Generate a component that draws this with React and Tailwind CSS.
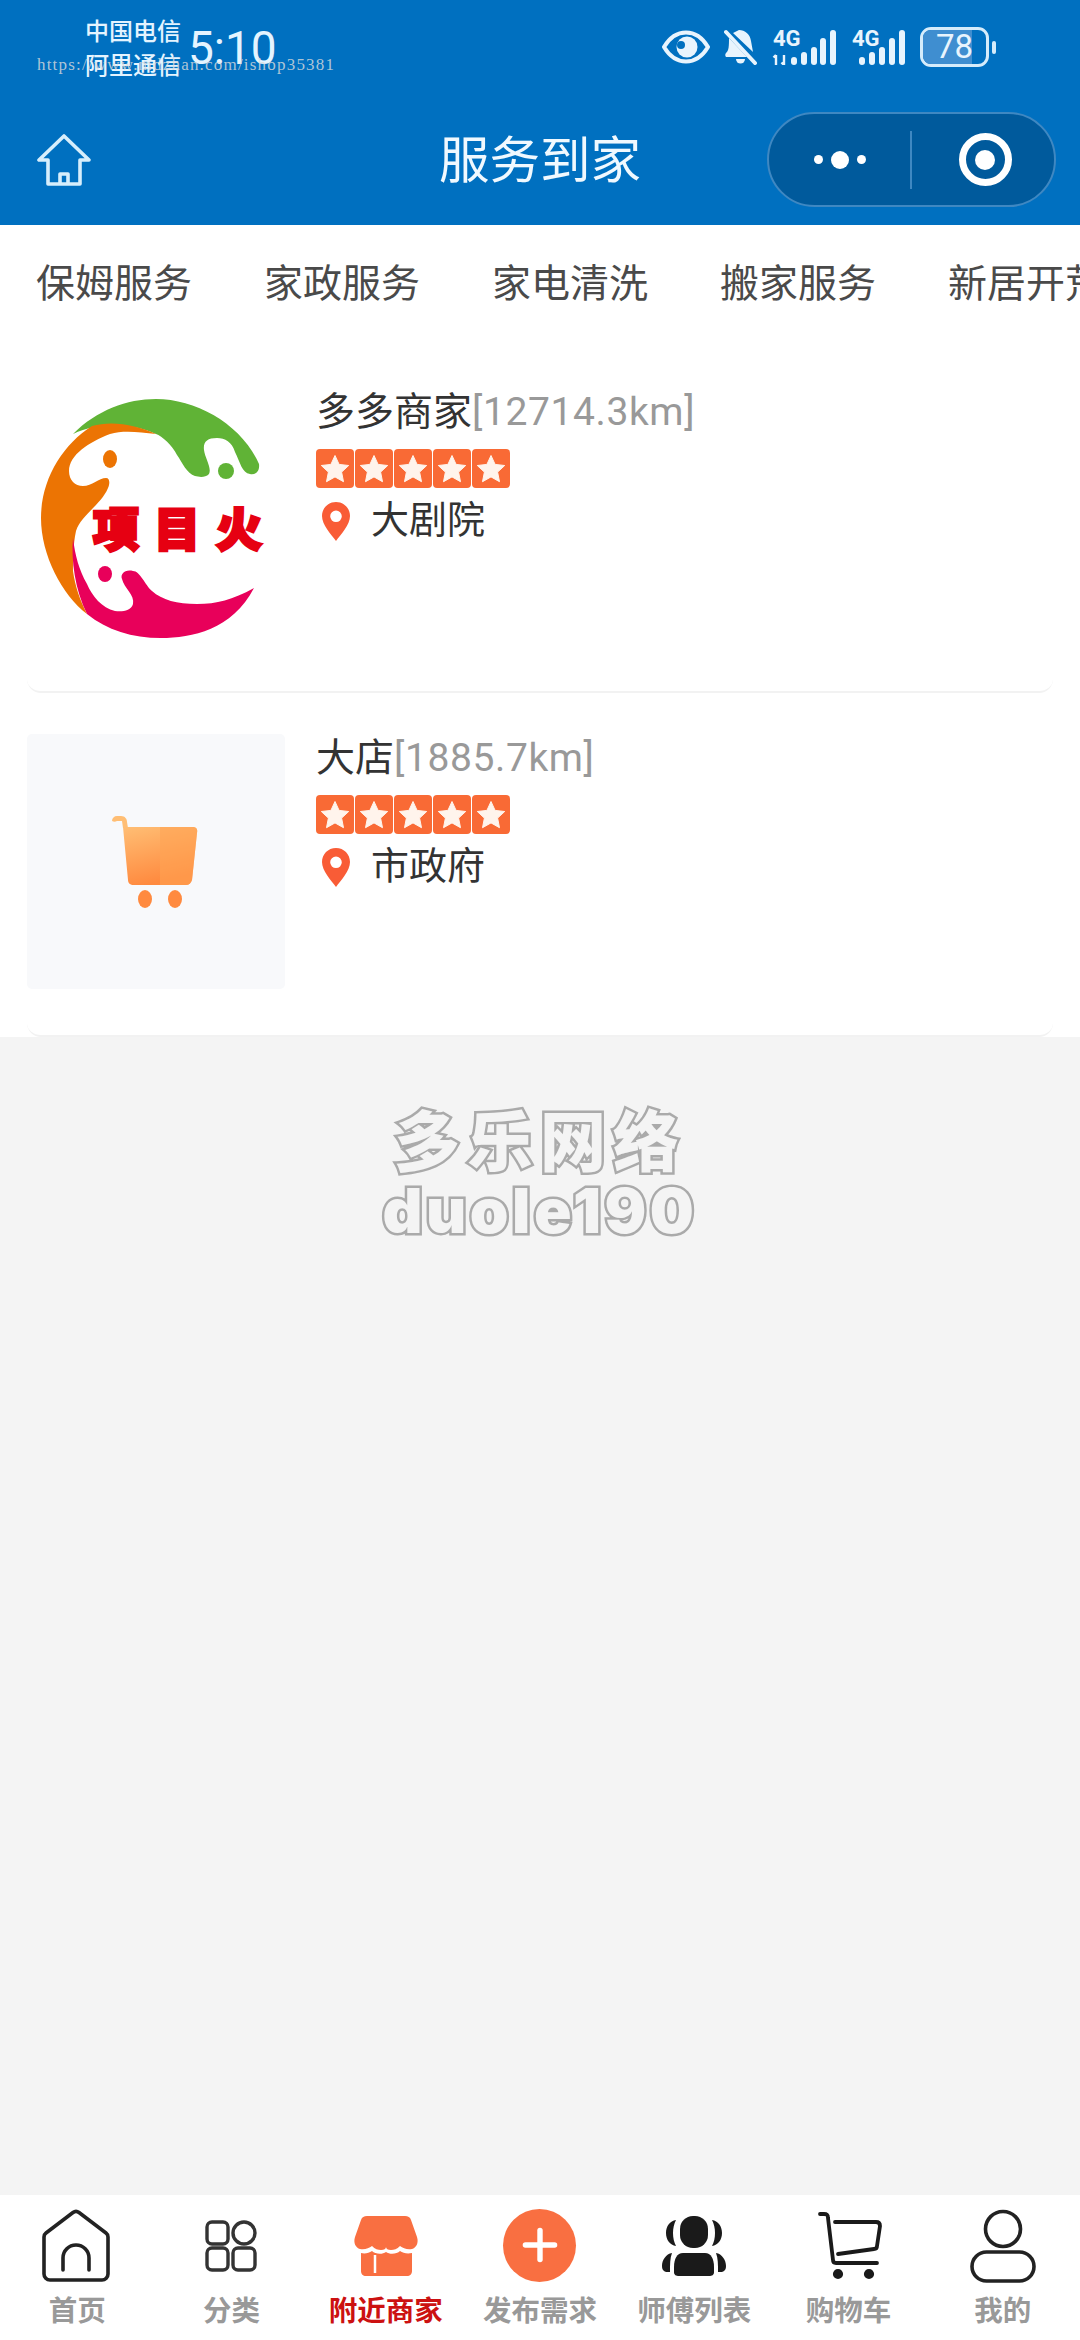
import { Plus } from 'lucide-react';

const tabs = ['保姆服务', '家政服务', '家电清洗', '搬家服务', '新居开荒'];

const Stars = () => (
  <div className="flex gap-[1.600px] h-[39px]">
    {[0, 1, 2, 3, 4].map((i) => (
      <div key={i} className="w-[37.500px] h-[39px] rounded-[4px] bg-[#f96a35] flex items-center justify-center">
        <svg width="32" height="32" viewBox="0 0 32 32">
          <path d="M16 2.500l4.100 8.900 9.600 1.100-7.100 6.600 1.900 9.600-8.500-4.800-8.500 4.800 1.900-9.600-7.100-6.600 9.600-1.100z" fill="#fff4ec" stroke="#fff4ec" strokeLinejoin="round" />
        </svg>
      </div>
    ))}
  </div>
);

const Pin = () => (
  <svg width="28" height="39" viewBox="0 0 28 39">
    <path fillRule="evenodd" d="M14 0C6 0 0 6.300 0 14c0 9 9 18 14 25 5-7 14-16 14-25C28 6.300 22 0 14 0zm0 8.500a5.800 5.800 0 1 1 0 11.600 5.800 5.800 0 0 1 0-11.600z" fill="#f95c36" />
  </svg>
);

const LogoImage = () => (
  <svg width="258" height="255" viewBox="0 0 258 255" className="shrink-0">
    <path d="M46 44C70 20 100 9 129 9C170 9 215 35 232 74C233 82 228 85 223 84C215 83 213 72 208 62C205 52 198 48 190 48C180 48 176 52 177 60C178 68 185 78 182 84C178 88 172 87 168 86C160 84 155 72 150 65C145 55 135 46 129 44C110 35 75 30 46 44Z" fill="#60b336" />
    <circle cx="199" cy="81" r="8" fill="#60b336" />
    <path d="M60 224C35 205 14 165 14 128C14 90 35 55 65 36C85 30 110 35 129 44C112 42 96 40 83 44C62 52 42 65 42 81C42 90 48 96 56 96C65 96 72 88 79 88C83 88 83 94 81 98C74 115 54 125 49 141C46 155 46 170 46 181C48 196 53 210 60 224Z" fill="#ec7403" />
    <ellipse cx="83" cy="69" rx="7" ry="9" fill="#ec7403" />
    <path d="M46 148C44 170 48 200 60 224C80 240 105 248 134 248C165 248 205 240 227 198C205 210 190 214 170 214C150 214 135 210 125 201C118 195 113 181 106 181C98 179 93 184 95 189C97 198 108 205 106 214C104 221 95 222 88 221C75 218 65 206 60 194C52 180 48 165 46 148Z" fill="#e8005a" />
    <ellipse cx="78" cy="184" rx="7" ry="8" fill="#e8005a" />
    <g className="font-['Noto_Sans_CJK_SC',sans-serif] font-black" fill="#e60012" stroke="#e60012" strokeWidth="3" fontSize="46">
      <text x="66" y="156">项</text>
      <text x="127" y="156">目</text>
      <text x="189" y="156">火</text>
    </g>
  </svg>
);

const CartImage = () => (
  <div className="w-[258px] h-[255px] shrink-0 rounded-[5px] bg-[#f8f9fb]">
    <svg width="258" height="255" viewBox="0 0 258 255">
      <defs>
        <linearGradient id="cartBody" x1="0" y1="0" x2="0.3" y2="1">
          <stop offset="0" stopColor="#ffbe74" />
          <stop offset="1" stopColor="#ff8a3f" />
        </linearGradient>
      </defs>
      <path d="M85 87a5 5 0 0 1 5-5h4c4 0 6 3 6 6l1 6h-5l-1-7h-5a5 5 0 0 1-5 0z" fill="#ffbe74" />
      <path d="M96 93h70c3 0 5 2 4 6l-5 47c-1 3-3 5-6 5h-52c-4 0-6-2-6-5l-5-53z" fill="url(#cartBody)" />
      <path d="M133 93h33c3 0 5 2 4 6l-5 47c-1 3-3 5-6 5h-26z" fill="#ffa454" opacity=".55" />
      <ellipse cx="118" cy="165" rx="7" ry="9" fill="#ff8a3f" />
      <ellipse cx="148" cy="165" rx="7" ry="9" fill="#ff8a3f" />
    </svg>
  </div>
);

const Bars = ({ xs }) => {
  const heights = [8, 13, 18, 27, 35];
  return xs.map((x, i) => (
    <rect key={x} x={x} y={36 - heights[i]} width="6" height={heights[i]} rx="3" fill="#e8f4fd" />
  ));
};

const StatusIcons = () => (
  <div className="ml-auto flex items-center">
    {/* eye */}
    <svg width="48" height="34" viewBox="0 0 48 34">
      <path d="M2 17C8 7 15 2.500 24 2.500S40 7 46 17c-6 10-13 14.500-22 14.500S8 27 2 17z" fill="none" stroke="#e8f4fd" strokeWidth="4" strokeLinejoin="round" />
      <circle cx="25" cy="17" r="10.500" fill="#e8f4fd" />
      <circle cx="19" cy="15" r="4" fill="#0070c0" />
    </svg>
    {/* muted bell */}
    <svg width="34" height="36" viewBox="0 0 34 36" className="ml-[14px]">
      <path d="M15 1c6 0 11 4 12 11l2 11-20-19zM5 9l18 19H2c-1-1-1-3 0-4 3-2 3-8 3-15z" fill="#e8f4fd" />
      <path d="M12 30h9a4.500 4.500 0 0 1-9 0z" fill="#e8f4fd" />
      <path d="M2 3l29 31" stroke="#e8f4fd" strokeWidth="4" strokeLinecap="round" />
    </svg>
    {/* first sim */}
    <svg width="66" height="44" viewBox="0 -8 66 44" className="ml-[13px] -mt-[8px]">
      <text x="2" y="17" fontSize="22" fontWeight="700" fill="#e8f4fd" className="font-['Roboto',sans-serif]">4G</text>
      <path d="M5 36V26M2.500 28.500L5 26M13 26v10M10.500 33.500L13 36" stroke="#e8f4fd" strokeWidth="2.400" fill="none" />
      <Bars xs={[20, 30, 40, 49, 59]} />
    </svg>
    {/* second sim */}
    <svg width="53" height="44" viewBox="0 -8 53 44" className="ml-[15px] -mt-[8px]">
      <text x="0" y="17" fontSize="22" fontWeight="700" fill="#e8f4fd" className="font-['Roboto',sans-serif]">4G</text>
      <Bars xs={[7, 17, 27, 37, 47]} />
    </svg>
    {/* battery */}
    <div className="ml-[15px] flex items-center gap-[3px]">
      <div className="relative w-[69px] h-[40px] rounded-[11px] border-[3px] border-[#d5ecfb] overflow-hidden">
        <div className="absolute left-0 top-0 bottom-0 w-[78%] bg-[#3f8ed0]" />
        <div className="relative text-center text-[33px] leading-[34px] text-[#e8f4fd] font-['Roboto',sans-serif]">78</div>
      </div>
      <div className="w-[4px] h-[13px] rounded-full bg-[#d5ecfb]" />
    </div>
  </div>
);

const ShopRow = ({ image, name, dist, place, top, infoTop }) => (
  <div className={`mx-[27px] flex gap-[31px] pb-[46px] border-b-2 border-[#f2f2f2] rounded-b-[14px] ${top}`}>
    {image}
    <div className={`flex flex-col items-start ${infoTop}`}>
      <div className="h-[44px] leading-[44px] text-[39px] whitespace-nowrap">
        <span className="text-[#333333]">{name}</span>
        <span className="text-[#999999] tracking-[0.600px]">[{dist}km]</span>
      </div>
      <div className="mt-[15px]"><Stars /></div>
      <div className="mt-[11px] flex items-center h-[42px]">
        <div className="ml-[6px] mt-[3px]"><Pin /></div>
        <span className="ml-[21px] text-[38px] leading-[42px] text-[#333333]">{place}</span>
      </div>
    </div>
  </div>
);

const navIcons = {
  home: (
    <svg width="76" height="76" viewBox="0 0 76 76" fill="none" stroke="#222222" strokeWidth="3.600" strokeLinecap="round" strokeLinejoin="round">
      <path d="M34 4.500a5 5 0 0 1 6 0l27 20.500a5 5 0 0 1 2 4V66a6 6 0 0 1-6 6H11a6 6 0 0 1-6-6V29a5 5 0 0 1 2-4z" />
      <path d="M24 62V50a13 13 0 0 1 26 0v12" />
    </svg>
  ),
  cate: (
    <svg width="76" height="76" viewBox="0 0 76 76" fill="none" stroke="#333333" strokeWidth="3.400">
      <rect x="14" y="14" width="21" height="22" rx="5" />
      <circle cx="51" cy="25" r="11" />
      <rect x="14" y="40" width="21" height="22" rx="5" />
      <rect x="40" y="40" width="22" height="22" rx="5" />
    </svg>
  ),
  shop: (
    <svg width="76" height="76" viewBox="0 0 76 76">
      <path d="M19 8h38c3 0 5 1 6 4l6 17c2 6-1 11-5 12-5 1-9-1-12-3-3 3-6 4-9 4-3 0-5-1-5-3 0 2-2 3-5 3-3 0-6-1-9-4-3 2-7 4-12 3-4-1-7-6-5-12l6-17c1-3 3-4 6-4z" fill="#f96f41" />
      <path d="M13 45c4 1 8 0 11-2 3 3 10 4 14 1 4 3 11 2 14-1 3 2 7 3 12 2v18c0 3-2 5-5 5H18c-3 0-5-2-5-5z" fill="#f96f41" />
      <path d="M27 47v18" stroke="#fff" strokeWidth="2.500" />
    </svg>
  ),
  publish: (
    <div className="w-[73px] h-[73px] -mt-[2px] rounded-full bg-[#f96f41] flex items-center justify-center">
      <Plus size={50} color="#ffffff" strokeWidth={2.600} />
    </div>
  ),
  master: (
    <svg width="76" height="76" viewBox="0 0 76 76" fill="#1a1a1a">
      <rect x="24" y="8" width="28" height="32" rx="13" />
      <path d="M20 12c-6 1-10 6-10 13s4 12 10 13c-2-4-3-8-3-13s1-9 3-13zM56 12c6 1 10 6 10 13s-4 12-10 13c2-4 3-8 3-13s-1-9-3-13z" />
      <path d="M27 45h22c6 0 9 6 9 14v5c0 3-2 4-5 4H23c-3 0-5-1-5-4v-5c0-8 3-14 9-14z" />
      <path d="M16 45c-6 1-10 7-10 13 0 4 2 6 6 6h2c0-8 0-14 2-19zM60 45c6 1 10 7 10 13 0 4-2 6-6 6h-2c0-8 0-14-2-19z" />
    </svg>
  ),
  cart: (
    <svg width="76" height="76" viewBox="0 0 76 76" fill="none" stroke="#1a1a1a" strokeWidth="3.800" strokeLinecap="round" strokeLinejoin="round">
      <path d="M9 6h4c3 0 4 1 4 4l5 42c0 2 1 3 3 3h41" />
      <path d="M24 14h41c3 0 4 2 4 4l-3 20c0 2-1 3-3 3l-36 5" />
      <circle cx="27" cy="66" r="3.200" fill="#1a1a1a" />
      <circle cx="58" cy="66" r="3.200" fill="#1a1a1a" />
    </svg>
  ),
  me: (
    <svg width="76" height="76" viewBox="0 0 76 76" fill="none" stroke="#222222" strokeWidth="3.600">
      <circle cx="38" cy="21" r="17.500" />
      <rect x="7" y="44" width="62" height="29" rx="14.500" />
    </svg>
  ),
};

const navItems = [
  { key: 'home', label: '首页' },
  { key: 'cate', label: '分类' },
  { key: 'shop', label: '附近商家', active: true },
  { key: 'publish', label: '发布需求' },
  { key: 'master', label: '师傅列表' },
  { key: 'cart', label: '购物车' },
  { key: 'me', label: '我的' },
];

export default function App() {
  return (
    <div className="relative flex flex-col w-[1080px] h-[2340px] overflow-hidden bg-[#f4f4f4] font-['Roboto','Noto_Sans_CJK_SC',sans-serif]">
      {/* 顶部状态栏 + 导航 */}
      <div className="bg-[#0070c0] h-[225px] shrink-0">
        <div className="flex items-center h-[94px] pl-[85px] pr-[84px]">
          <div className="pt-[3px] text-[24px] leading-[34px] font-medium text-[#e4f4ff]">
            <div>中国电信</div>
            <div>阿里通信</div>
          </div>
          <div className="ml-[7px] pt-[1px] text-[46px] leading-[50px] text-[#e4f4ff]">5:10</div>
          <StatusIcons />
        </div>
        <div className="grid grid-cols-[1fr_auto_1fr] items-center h-[131px]">
          <div className="pl-[37px]">
            <svg width="54" height="54" viewBox="0 0 54 54" fill="none" stroke="#d6eefc" strokeWidth="3.600" strokeLinejoin="round">
              <path d="M27 3L2 27h9v24h32V27h9z" />
              <path d="M23 51V41h8v10" />
            </svg>
          </div>
          <div className="pt-[2px] text-[50.500px] leading-[60px] text-[#f0f9ff]">服务到家</div>
          <div className="flex justify-end pr-[24px]">
            <div className="flex items-center w-[289px] h-[95px] rounded-full bg-[#005a9c] border-2 border-[#3f88c2]">
              <div className="w-[141px] flex items-center justify-center gap-[8px]">
                <span className="w-[9px] h-[9px] rounded-full bg-white" />
                <span className="w-[18px] h-[18px] rounded-full bg-white" />
                <span className="w-[9px] h-[9px] rounded-full bg-white" />
              </div>
              <div className="w-[2px] h-[58px] bg-[#3f88c2]" />
              <div className="flex-1 flex items-center justify-center pl-[4px]">
                <div className="w-[53px] h-[53px] rounded-full border-[7px] border-white flex items-center justify-center">
                  <span className="w-[20px] h-[20px] rounded-full bg-white" />
                </div>
              </div>
            </div>
          </div>
        </div>
      </div>

      {/* 水印 */}
      <div className="absolute left-[37px] top-[55px] text-[17px] leading-[20px] tracking-[1.200px] text-[#dcdcdc]/80 font-['Liberation_Serif',serif]">
        https://www.mdzhan.com/ishop35381
      </div>

      <div className="bg-white shrink-0">
        {/* 分类标签 */}
        <div className="flex h-[121px] pb-[4px] pl-[36px] items-center gap-[72px] overflow-hidden">
          {tabs.map((t) => (
            <span key={t} className="shrink-0 text-[39px] leading-[50px] text-[#4a4a4a]">{t}</span>
          ))}
        </div>
        <ShopRow top="pt-[44px]" infoTop="pt-0" image={<LogoImage />} name="多多商家" dist="12714.3" place="大剧院" />
        <ShopRow top="pt-[41px]" infoTop="pt-[2px]" image={<CartImage />} name="大店" dist="1885.7" place="市政府" />
      </div>

      {/* 底部 logo */}
      <div className="flex-1 flex flex-col items-center pt-[62px]">
        <div className="text-[66px] leading-[76px] tracking-[7px] font-black text-[#f4f4f4] [-webkit-text-stroke:5px_#aaaaaa] [paint-order:stroke_fill] font-['Noto_Sans_CJK_SC',sans-serif]">
          多乐网络
        </div>
        <div className="mt-[8px] text-[62px] leading-[56px] tracking-[3.500px] font-black text-[#f4f4f4] [-webkit-text-stroke:5px_#aaaaaa] [paint-order:stroke_fill] font-['Inter',sans-serif]">
          duole190
        </div>
      </div>

      {/* 底部导航 */}
      <div className="grid grid-cols-7 h-[145px] shrink-0 bg-white pt-[13px]">
        {navItems.map((n) => (
          <div key={n.key} className="flex flex-col items-center">
            <div className="w-[76px] h-[76px] flex items-center justify-center">{navIcons[n.key]}</div>
            <div className={`mt-[8px] text-[28.500px] leading-[40px] font-bold whitespace-nowrap ${n.active ? 'text-[#cc1111]' : 'text-[#999999]'}`}>
              {n.label}
            </div>
          </div>
        ))}
      </div>
    </div>
  );
}
